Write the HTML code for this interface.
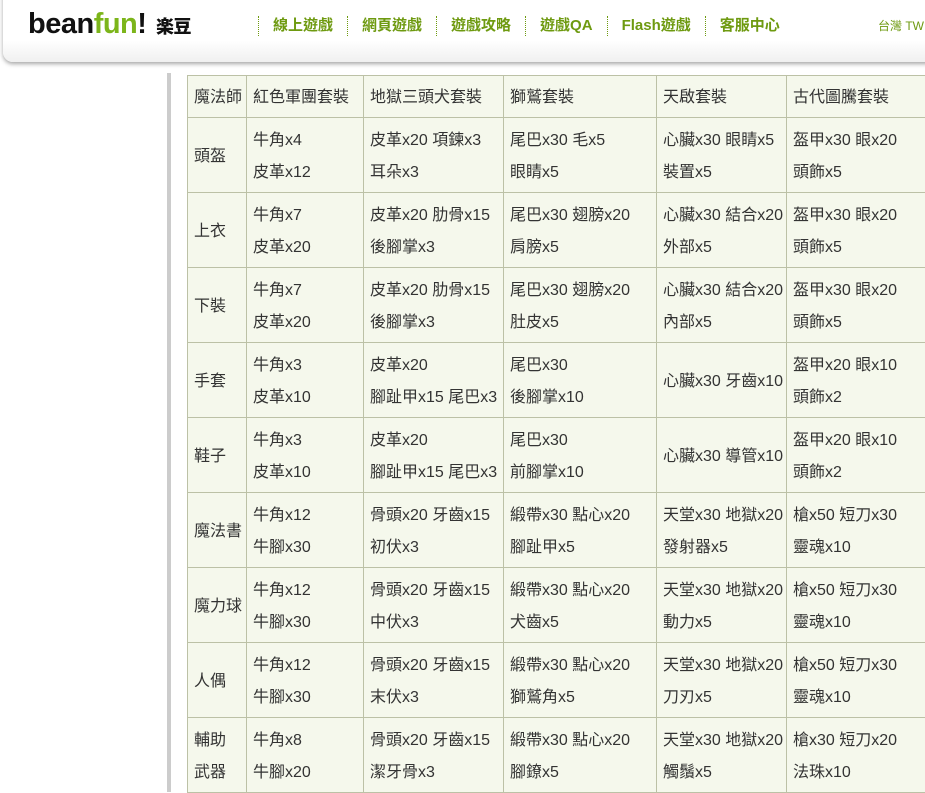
<!DOCTYPE html>
<html><head><meta charset="utf-8"><style>
body{margin:0;width:925px;height:792px;overflow:hidden;background:#fff;font-family:"Liberation Sans","Noto Sans CJK TC",sans-serif;position:relative}
.hd{position:absolute;left:3px;top:-10px;width:960px;height:72px;background:linear-gradient(#fff 0,#fff 70%,#f0f0f0 100%);border-radius:0 0 0 10px;box-shadow:0 2px 4px rgba(0,0,0,.35)}
.logo{position:absolute;left:28px;top:8px;font-size:29px;font-weight:bold;letter-spacing:-0.5px;color:#111}
.logo span{color:#7cb51a}
.logo b{font-size:18px;color:#111;margin-left:2px}
.nav{position:absolute;top:16px;left:258px;display:flex;font-size:15px;font-weight:bold;color:#6e9a10}
.nav div{border-left:1px dotted #6e9a10;padding:0 14px;height:20px;line-height:20px}
.tw{position:absolute;left:878px;top:17px;font-size:12px;color:#6e9a10}
.bar{position:absolute;left:167px;top:73px;width:4px;height:719px;background:#ccc}
table{position:absolute;left:187px;top:75px;border-collapse:collapse;table-layout:fixed;width:751px;background:#f5f8ec;font-size:16px;color:#333}
td{border:1px solid #bcc1a6;padding:3px 6px 0;vertical-align:middle;line-height:32px;white-space:nowrap;overflow:hidden}
tr{height:75px}
tr.h{height:42px}
</style></head><body>
<div class="hd"></div>
<div class="logo">bean<span>fun</span>! <b>楽豆</b></div>
<div class="nav"><div>線上遊戲</div><div>網頁遊戲</div><div>遊戲攻略</div><div>遊戲QA</div><div>Flash遊戲</div><div>客服中心</div></div>
<div class="tw">台灣 TW</div>
<div class="bar"></div>
<table>
<colgroup><col style="width:59px"><col style="width:117px"><col style="width:140px"><col style="width:153px"><col style="width:130px"><col style="width:152px"></colgroup>
<tr class="h"><td>魔法師</td><td>紅色軍團套裝</td><td>地獄三頭犬套裝</td><td>獅鷲套裝</td><td>天啟套裝</td><td>古代圖騰套裝</td></tr>
<tr><td>頭盔</td><td>牛角x4<br>皮革x12</td><td>皮革x20 項鍊x3<br>耳朵x3</td><td>尾巴x30 毛x5<br>眼睛x5</td><td>心臟x30 眼睛x5<br>裝置x5</td><td>盔甲x30 眼x20<br>頭飾x5</td></tr>
<tr><td>上衣</td><td>牛角x7<br>皮革x20</td><td>皮革x20 肋骨x15<br>後腳掌x3</td><td>尾巴x30 翅膀x20<br>肩膀x5</td><td>心臟x30 結合x20<br>外部x5</td><td>盔甲x30 眼x20<br>頭飾x5</td></tr>
<tr><td>下裝</td><td>牛角x7<br>皮革x20</td><td>皮革x20 肋骨x15<br>後腳掌x3</td><td>尾巴x30 翅膀x20<br>肚皮x5</td><td>心臟x30 結合x20<br>內部x5</td><td>盔甲x30 眼x20<br>頭飾x5</td></tr>
<tr><td>手套</td><td>牛角x3<br>皮革x10</td><td>皮革x20<br>腳趾甲x15 尾巴x3</td><td>尾巴x30<br>後腳掌x10</td><td>心臟x30 牙齒x10</td><td>盔甲x20 眼x10<br>頭飾x2</td></tr>
<tr><td>鞋子</td><td>牛角x3<br>皮革x10</td><td>皮革x20<br>腳趾甲x15 尾巴x3</td><td>尾巴x30<br>前腳掌x10</td><td>心臟x30 導管x10</td><td>盔甲x20 眼x10<br>頭飾x2</td></tr>
<tr><td>魔法書</td><td>牛角x12<br>牛腳x30</td><td>骨頭x20 牙齒x15<br>初伏x3</td><td>緞帶x30 點心x20<br>腳趾甲x5</td><td>天堂x30 地獄x20<br>發射器x5</td><td>槍x50 短刀x30<br>靈魂x10</td></tr>
<tr><td>魔力球</td><td>牛角x12<br>牛腳x30</td><td>骨頭x20 牙齒x15<br>中伏x3</td><td>緞帶x30 點心x20<br>犬齒x5</td><td>天堂x30 地獄x20<br>動力x5</td><td>槍x50 短刀x30<br>靈魂x10</td></tr>
<tr><td>人偶</td><td>牛角x12<br>牛腳x30</td><td>骨頭x20 牙齒x15<br>末伏x3</td><td>緞帶x30 點心x20<br>獅鷲角x5</td><td>天堂x30 地獄x20<br>刀刃x5</td><td>槍x50 短刀x30<br>靈魂x10</td></tr>
<tr><td>輔助<br>武器</td><td>牛角x8<br>牛腳x20</td><td>骨頭x20 牙齒x15<br>潔牙骨x3</td><td>緞帶x30 點心x20<br>腳鐐x5</td><td>天堂x30 地獄x20<br>觸鬚x5</td><td>槍x30 短刀x20<br>法珠x10</td></tr>
</table>
</body></html>
